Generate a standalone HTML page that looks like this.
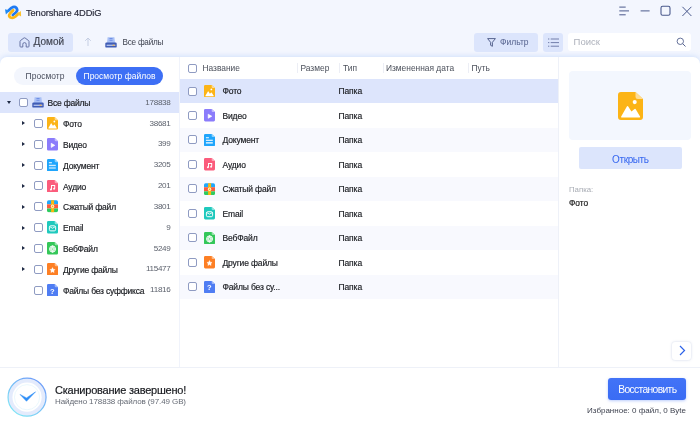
<!DOCTYPE html>
<html lang="ru"><head><meta charset="utf-8"><title>Tenorshare 4DDiG</title>
<style>
*{box-sizing:border-box;margin:0;padding:0}
html,body{width:700px;height:425px;overflow:hidden}
body{font-family:"Liberation Sans","DejaVu Sans",sans-serif;background:#f3f6fe;color:#1c1c1c;position:relative;font-size:9px}
#app{position:absolute;left:0;top:0;width:700px;height:425px;will-change:transform}
.abs{position:absolute}
i{display:block;font-style:normal}
#title{left:26px;top:6.500px;font-size:9.300px;line-height:12px;color:#2a2c3c;letter-spacing:-0.1px;white-space:nowrap}
#home{left:8px;top:32.500px;width:65.300px;height:19.200px;background:#dce5fc;border-radius:3px}
#home span{position:absolute;left:25.600px;top:3.700px;-webkit-text-stroke:0.15px currentColor;font-size:10px;line-height:12px;color:#3f4350}
#crumb{left:122.500px;top:37.600px;font-size:8.200px;line-height:10px;color:#3f4350;white-space:nowrap;letter-spacing:-0.25px}
#filter{left:474px;top:32.500px;width:64px;height:19.200px;background:#dce5fc;border-radius:3px}
#filter span{position:absolute;left:26px;top:4.800px;font-size:8.500px;line-height:10px;color:#56638f}
#listbtn{left:543px;top:32.500px;width:20px;height:19.200px;background:#dce5fc;border-radius:3px}
#search{left:568.300px;top:32.700px;width:122.700px;height:18.400px;background:#fff;border-radius:3px}
#search span{position:absolute;left:5.300px;top:3.800px;font-size:9.500px;line-height:12px;color:#adb1bb}
#shadow{display:none}
#panel{left:0;top:56.800px;width:700px;height:311px;background:#fff;border-radius:7px 7px 0 0;box-shadow:0 -1px 5px rgba(178,205,250,.5)}
#side{left:0;top:57px;width:179.900px;height:310px;border-right:1.300px solid #f0f3fb}
#tabs{left:14px;top:66.600px;width:149px;height:18px;border-radius:9px;background:#f3f6fd}
#tabs .t1{position:absolute;left:0;top:0;width:62px;height:18px;line-height:18.500px;text-align:center;font-size:8.500px;color:#4a4f5e}
#tabs .t2{position:absolute;left:62px;top:0;width:87px;height:18px;line-height:18.500px;text-align:center;font-size:8.500px;color:#fff;background:#3d6ff5;border-radius:9px}
.trow{position:absolute;left:0;width:178.800px;height:20.800px}
.trow.sel{background:#dde5fc}
.trow .arr{position:absolute;width:0;height:0}
.arr.down{top:9px;border-left:2.300px solid transparent;border-right:2.300px solid transparent;border-top:3px solid #1f2a44}
.arr.right{top:8.500px;border-top:2.500px solid transparent;border-bottom:2.500px solid transparent;border-left:3px solid #1f2a44}
.cb{position:absolute;width:9px;height:9px;border:1px solid #8f9bc2;border-radius:2px;background:#fff}
.trow .cb{top:6px}
.trow .ic{position:absolute;top:4.200px;width:11px;height:12.600px}
.trow .nm{position:absolute;top:6.300px;font-size:8.500px;line-height:11px;color:#1b1d22;white-space:nowrap;letter-spacing:-0.2px}
.trow .ct{position:absolute;right:8.300px;top:4.700px;font-size:8.100px;line-height:11px;color:#5d626d;letter-spacing:-0.300px}
#mid{left:179px;top:57px;width:380px;height:310px;border-right:1px solid #eef1f8}
.hdr{position:absolute;top:62.900px;font-size:8.400px;line-height:10px;color:#4a4f5a;white-space:nowrap}
.sep{position:absolute;top:63px;width:1px;height:10px;background:#eceef5}
.frow{position:absolute;left:179.800px;width:378.500px;height:24.500px}
.frow.alt::before{content:"";position:absolute;left:0;top:0.400px;width:100%;height:23.800px;background:#f8f9fe}
.frow.sel{background:#dde5fc}
.frow .cb{left:8.200px;top:8px}
.frow .ic{position:absolute;left:24.200px;top:6.400px;width:11px;height:12.400px}
.frow .nm{position:absolute;left:42.700px;top:7.800px;font-size:8.500px;line-height:11px;color:#1b1d22;white-space:nowrap;letter-spacing:-0.15px}
.frow .tp{position:absolute;left:158.700px;top:7.800px;font-size:8.500px;line-height:11px;color:#1b1d22;letter-spacing:-0.1px}
#prev{left:569px;top:71px;width:122px;height:69px;background:#f3f7fe;border-radius:4px}
#open{left:579px;top:147.200px;width:102.700px;height:21.800px;background:#dce5fc;border-radius:2px;text-align:center;line-height:25.600px;font-size:10px;color:#3566f0;letter-spacing:-0.400px;overflow:hidden}
#pl{left:569px;top:185px;font-size:7.800px;line-height:10px;color:#a8acb4}
#pv{left:569px;top:198.300px;font-size:8.400px;line-height:10px;color:#1b1b1b}
#next{left:672.300px;top:342.300px;width:18.500px;height:18px;background:#fff;border-radius:3px;box-shadow:0 0 2.500px rgba(120,140,190,.4)}
#bottom{left:0;top:366.500px;width:700px;height:58.500px;background:#fff;border-top:1px solid #eef1f8}
#done{left:55px;top:382.800px;font-size:11px;line-height:14px;color:#16181d;letter-spacing:-0.22px;white-space:nowrap}
#found{left:55px;top:396.800px;font-size:8px;line-height:10px;color:#666b75;letter-spacing:-0.1px;white-space:nowrap}
#rec{left:608px;top:378px;width:78px;height:21.500px;background:linear-gradient(#4273f7,#3a6cf4);border-radius:3px;color:#fff;font-size:10.300px;line-height:24px;text-align:center;box-shadow:0 1px 3px rgba(61,111,245,.35);letter-spacing:-0.650px;padding-left:0.600px;overflow:hidden}
#fav{right:14px;top:405.800px;font-size:8px;line-height:10px;color:#3f4350;white-space:nowrap}
.nm,.tp,#pv,#done,#title{-webkit-text-stroke:0.18px currentColor}
</style></head><body>
<div id="app">
<svg class="abs" style="left:1.800px;top:2.900px" width="24" height="20" viewBox="0 0 24 20"><path d="M6.300 7.800L9.500 4.800Q12.500 3 14.500 5Q16.200 7.500 13.800 9.500L10.800 12" fill="none" stroke="#1f7af3" stroke-width="2.700" stroke-linecap="round" stroke-linejoin="round"/><path d="M3 6.200L3.900 11.400L7.800 7.400Z" fill="#1f8af5"/><path d="M11.200 7.200L8 10.500Q6 13 8.500 14.500Q11 15.500 13.500 13.500L16.500 10.800" fill="none" stroke="#fbb615" stroke-width="2.700" stroke-linecap="round" stroke-linejoin="round"/><path d="M18.900 7.900L19.100 13.500L15 11Z" fill="#fcc22b"/></svg>
<div id="panel" class="abs"></div>
<div id="title" class="abs">Tenorshare 4DDiG</div>
<div id="home" class="abs"><svg style="position:absolute;left:11px;top:4.500px" width="11" height="11" viewBox="0 0 11 11"><path d="M1 4.400Q1 3.900 1.400 3.600L4.900 1Q5.500 0.600 6.100 1L9.600 3.600Q10 3.900 10 4.400V9.200Q10 10 9.200 10H7.200V7.300A1.700 1.700 0 0 0 3.800 7.300V10H1.800Q1 10 1 9.200Z" fill="none" stroke="#6773a3" stroke-width="1"/></svg><span>Домой</span></div>
<svg class="abs" style="left:84px;top:37px" width="8" height="9" viewBox="0 0 8 9"><path d="M4 9V1M1.200 3.800L4 1L6.800 3.800" fill="none" stroke="#c5cee3" stroke-width="1"/></svg>
<svg class="abs" style="left:104.500px;top:36.500px" width="12" height="11" viewBox="0 0 12 11"><path d="M2.600 0.300H9.400L10 6H2Z" fill="#a9c0f5"/><path d="M4.600 1.500H7.400M4.600 3.200H7.400" stroke="#5d7fe0" stroke-width="1.100"/><path d="M6 0.800V4" stroke="#a9c0f5" stroke-width="0.500"/><rect x="0.300" y="5.600" width="11.400" height="5" rx="1.200" fill="#3f5cb5"/><rect x="1.600" y="7.700" width="8.800" height="1.100" fill="#c9d6f7"/><rect x="7.600" y="7.700" width="2" height="1.100" fill="#f2b24a"/></svg>
<div id="crumb" class="abs">Все файлы</div>
<div id="filter" class="abs"><svg style="position:absolute;left:13px;top:5.500px" width="9" height="9" viewBox="0 0 9 9"><path d="M0.600 0.600H8.400L5.400 4.300V8.300L3.600 7.300V4.300Z" fill="none" stroke="#56638f" stroke-width="1" stroke-linejoin="round"/></svg><span>Фильтр</span></div>
<div id="listbtn" class="abs"><svg style="position:absolute;left:4.800px;top:5.200px" width="11" height="9" viewBox="0 0 11 9"><path d="M0 1h1.300M2.700 1h8.300M0 4.600h1.300M2.700 4.600h8.300M0 8.200h1.300M2.700 8.200h8.300" stroke="#5f6c9c" stroke-width="0.850"/></svg></div>
<div id="search" class="abs"><span>Поиск</span><svg style="position:absolute;left:107.600px;top:4.400px" width="11" height="11" viewBox="0 0 11 11"><circle cx="4.300" cy="4.300" r="3.200" fill="none" stroke="#56638f" stroke-width="0.900"/><path d="M6.700 6.700L9.500 9.500" stroke="#56638f" stroke-width="1"/></svg></div>
<svg class="abs" style="left:618px;top:4.400px" width="76" height="14" viewBox="0 0 76 14"><path d="M1.300 3.100H7.700M1.300 6.900H11M1.300 10.800H7.700" stroke="#4a598c" stroke-width="1"/><path d="M22.600 6.900H31.600" stroke="#4a598c" stroke-width="1"/><rect x="43" y="2.300" width="9" height="9" rx="1.600" fill="none" stroke="#4a598c" stroke-width="1.100"/><path d="M64.400 2.800L73.400 12M73.400 2.800L64.400 12" stroke="#4a598c" stroke-width="1"/></svg>
<div id="side" class="abs"></div>
<div id="tabs" class="abs"><div class="t1">Просмотр</div><div class="t2">Просмотр файлов</div></div>
<div id="tree">
<div class="trow sel" style="top:92.1px"><i class="arr down" style="left:6.700px"></i><i class="cb" style="left:19px"></i><svg class="abs" style="left:32.300px;top:5.200px" width="12" height="11" viewBox="0 0 12 11"><path d="M2.600 0.300H9.400L10 6H2Z" fill="#a9c0f5"/><path d="M4.600 1.500H7.400M4.600 3.200H7.400" stroke="#5d7fe0" stroke-width="1.100"/><path d="M6 0.800V4" stroke="#a9c0f5" stroke-width="0.500"/><rect x="0.300" y="5.600" width="11.400" height="5" rx="1.200" fill="#3f5cb5"/><rect x="1.600" y="7.700" width="8.800" height="1.100" fill="#c9d6f7"/><rect x="7.600" y="7.700" width="2" height="1.100" fill="#f2b24a"/></svg><span class="nm" style="left:47.500px">Все файлы</span><span class="ct">178838</span></div>
<div class="trow" style="top:112.9px"><i class="arr right" style="left:22.300px"></i><i class="cb" style="left:34px"></i><svg class="ic" style="left:47px" viewBox="0 0 11 12" preserveAspectRatio="none"><path d="M1.3 0H7.7L11 3V10.700A1.3 1.3 0 0 1 9.700 12H1.3A1.3 1.3 0 0 1 0 10.700V1.3A1.3 1.3 0 0 1 1.3 0Z" fill="#fcb416"/><path d="M7.7 0L11 3H8.700A1 1 0 0 1 7.7 2Z" fill="#fddc94"/><path d="M1.600 10.900Q1.200 10.900 1.400 10.500L3.900 6.200Q4.200 5.800 4.500 6.200L5.900 8.400L7.300 7.300Q7.600 7.100 7.800 7.400L9.700 10.500Q9.900 10.900 9.500 10.900Z" fill="#fff"/><circle cx="7.350" cy="4.300" r="0.900" fill="#fff"/></svg><span class="nm" style="left:63px">Фото</span><span class="ct">38681</span></div>
<div class="trow" style="top:133.8px"><i class="arr right" style="left:22.300px"></i><i class="cb" style="left:34px"></i><svg class="ic" style="left:47px" viewBox="0 0 11 12" preserveAspectRatio="none"><path d="M1.3 0H7.7L11 3V10.700A1.3 1.3 0 0 1 9.700 12H1.3A1.3 1.3 0 0 1 0 10.700V1.3A1.3 1.3 0 0 1 1.3 0Z" fill="#8b7cfb"/><path d="M7.7 0L11 3H8.700A1 1 0 0 1 7.7 2Z" fill="#c3bbfd"/><path d="M4.200 5L7.800 7L4.200 9Z" fill="#fff" stroke="#fff" stroke-width="0.600" stroke-linejoin="round"/></svg><span class="nm" style="left:63px">Видео</span><span class="ct">399</span></div>
<div class="trow" style="top:154.6px"><i class="arr right" style="left:22.300px"></i><i class="cb" style="left:34px"></i><svg class="ic" style="left:47px" viewBox="0 0 11 12" preserveAspectRatio="none"><path d="M1.3 0H7.7L11 3V10.700A1.3 1.3 0 0 1 9.700 12H1.3A1.3 1.3 0 0 1 0 10.700V1.3A1.3 1.3 0 0 1 1.3 0Z" fill="#1fa5fc"/><path d="M7.7 0L11 3H8.700A1 1 0 0 1 7.7 2Z" fill="#8fd3fd"/><path d="M1.900 3.600H4.900M1.900 8.600H8.800" stroke="#fff" stroke-width="1"/><path d="M1.900 6.150H8.800" stroke="#fff" stroke-width="1.300" opacity="0.800"/></svg><span class="nm" style="left:63px">Документ</span><span class="ct">3205</span></div>
<div class="trow" style="top:175.4px"><i class="arr right" style="left:22.300px"></i><i class="cb" style="left:34px"></i><svg class="ic" style="left:47px" viewBox="0 0 11 12" preserveAspectRatio="none"><path d="M1.3 0H7.7L11 3V10.700A1.3 1.3 0 0 1 9.700 12H1.3A1.3 1.3 0 0 1 0 10.700V1.3A1.3 1.3 0 0 1 1.3 0Z" fill="#fb5c7c"/><path d="M7.7 0L11 3H8.700A1 1 0 0 1 7.7 2Z" fill="#fda6b8"/><path d="M4.500 9V5.300H7.700V8.300" fill="none" stroke="#fff" stroke-width="1"/><circle cx="3.900" cy="9.050" r="0.950" fill="#fff"/><circle cx="7.100" cy="8.400" r="0.950" fill="#fff"/></svg><span class="nm" style="left:63px">Аудио</span><span class="ct">201</span></div>
<div class="trow" style="top:196.2px"><i class="arr right" style="left:22.300px"></i><i class="cb" style="left:34px"></i><svg class="ic" style="left:47px" viewBox="0 0 11 12" preserveAspectRatio="none"><clipPath id="zc"><rect x="0" y="0.300" width="11" height="11.400" rx="1.600"/></clipPath><g clip-path="url(#zc)"><rect width="11" height="4.100" fill="#1fa8fb"/><rect y="4.100" width="11" height="4" fill="#fb5b3c"/><rect y="8.100" width="11" height="3.900" fill="#2ecb60"/><rect x="4.100" width="3" height="12" fill="#fbb70f"/></g><circle cx="5.550" cy="6.100" r="1.250" fill="#fbb70f" stroke="#fff" stroke-width="0.900"/></svg><span class="nm" style="left:63px">Сжатый файл</span><span class="ct">3801</span></div>
<div class="trow" style="top:217.0px"><i class="arr right" style="left:22.300px"></i><i class="cb" style="left:34px"></i><svg class="ic" style="left:47px" viewBox="0 0 11 12" preserveAspectRatio="none"><path d="M1.3 0H7.7L11 3V10.700A1.3 1.3 0 0 1 9.700 12H1.3A1.3 1.3 0 0 1 0 10.700V1.3A1.3 1.3 0 0 1 1.3 0Z" fill="#1fc9bd"/><path d="M7.7 0L11 3H8.700A1 1 0 0 1 7.7 2Z" fill="#8fe6df"/><rect x="2.400" y="4.600" width="6.200" height="4.800" rx="1.300" fill="none" stroke="#fff" stroke-width="0.950"/><path d="M2.900 5.500L5.500 6.900L8.100 5.500" fill="none" stroke="#fff" stroke-width="0.850"/></svg><span class="nm" style="left:63px">Email</span><span class="ct">9</span></div>
<div class="trow" style="top:237.9px"><i class="arr right" style="left:22.300px"></i><i class="cb" style="left:34px"></i><svg class="ic" style="left:47px" viewBox="0 0 11 12" preserveAspectRatio="none"><path d="M1.3 0H7.7L11 3V10.700A1.3 1.3 0 0 1 9.700 12H1.3A1.3 1.3 0 0 1 0 10.700V1.3A1.3 1.3 0 0 1 1.3 0Z" fill="#34c759"/><path d="M7.7 0L11 3H8.700A1 1 0 0 1 7.7 2Z" fill="#98e4aa"/><circle cx="5.550" cy="6.700" r="3" fill="#fff" fill-opacity="0.350" stroke="#fff" stroke-width="0.850"/><path d="M2.600 6.700H8.500M5.550 3.700V9.700" stroke="#fff" stroke-width="0.800"/><ellipse cx="5.550" cy="6.700" rx="1.400" ry="3" fill="none" stroke="#fff" stroke-width="0.700"/><circle cx="5.550" cy="6.700" r="0.550" fill="#34c759"/></svg><span class="nm" style="left:63px">ВебФайл</span><span class="ct">5249</span></div>
<div class="trow" style="top:258.7px"><i class="arr right" style="left:22.300px"></i><i class="cb" style="left:34px"></i><svg class="ic" style="left:47px" viewBox="0 0 11 12" preserveAspectRatio="none"><path d="M1.3 0H7.7L11 3V10.700A1.3 1.3 0 0 1 9.700 12H1.3A1.3 1.3 0 0 1 0 10.700V1.3A1.3 1.3 0 0 1 1.3 0Z" fill="#fd7f24"/><path d="M7.7 0L11 3H8.700A1 1 0 0 1 7.7 2Z" fill="#febd8c"/><path d="M5.500 4.400L6.300 6L8.050 6.250L6.800 7.450L7.100 9.150L5.500 8.300L3.900 9.150L4.200 7.450L2.950 6.250L4.700 6Z" fill="#fff" stroke="#fff" stroke-width="0.400" stroke-linejoin="round"/></svg><span class="nm" style="left:63px">Другие файлы</span><span class="ct">115477</span></div>
<div class="trow" style="top:279.5px"><i class="cb" style="left:34px"></i><svg class="ic" style="left:47px" viewBox="0 0 11 12" preserveAspectRatio="none"><path d="M1.3 0H7.7L11 3V10.700A1.3 1.3 0 0 1 9.700 12H1.3A1.3 1.3 0 0 1 0 10.700V1.3A1.3 1.3 0 0 1 1.3 0Z" fill="#4f7df3"/><path d="M7.7 0L11 3H8.700A1 1 0 0 1 7.7 2Z" fill="#a0baf9"/><text x="5.450" y="9.100" font-size="7.600" font-weight="bold" text-anchor="middle" fill="#fff" font-family="Liberation Sans, sans-serif">?</text></svg><span class="nm" style="left:63px">Файлы без суффикса</span><span class="ct">11816</span></div>
</div>
<div id="mid" class="abs"></div>
<i class="cb abs" style="left:188px;top:63.500px"></i>
<div class="hdr" style="left:202.500px">Название</div><div class="sep" style="left:296.500px"></div>
<div class="hdr" style="left:300.500px">Размер</div><div class="sep" style="left:339px"></div>
<div class="hdr" style="left:343px">Тип</div><div class="sep" style="left:382.500px"></div>
<div class="hdr" style="left:386px">Измененная дата</div><div class="sep" style="left:468px"></div>
<div class="hdr" style="left:471.500px">Путь</div>
<div id="files">
<div class="frow sel" style="top:78.50px"><i class="cb"></i><svg class="ic" viewBox="0 0 11 12" preserveAspectRatio="none"><path d="M1.3 0H7.7L11 3V10.700A1.3 1.3 0 0 1 9.700 12H1.3A1.3 1.3 0 0 1 0 10.700V1.3A1.3 1.3 0 0 1 1.3 0Z" fill="#fcb416"/><path d="M7.7 0L11 3H8.700A1 1 0 0 1 7.7 2Z" fill="#fddc94"/><path d="M1.600 10.900Q1.200 10.900 1.400 10.500L3.900 6.200Q4.200 5.800 4.500 6.200L5.900 8.400L7.300 7.300Q7.600 7.100 7.800 7.400L9.700 10.500Q9.900 10.900 9.500 10.900Z" fill="#fff"/><circle cx="7.350" cy="4.300" r="0.900" fill="#fff"/></svg><span class="nm">Фото</span><span class="tp">Папка</span></div>
<div class="frow" style="top:102.98px"><i class="cb"></i><svg class="ic" viewBox="0 0 11 12" preserveAspectRatio="none"><path d="M1.3 0H7.7L11 3V10.700A1.3 1.3 0 0 1 9.700 12H1.3A1.3 1.3 0 0 1 0 10.700V1.3A1.3 1.3 0 0 1 1.3 0Z" fill="#8b7cfb"/><path d="M7.7 0L11 3H8.700A1 1 0 0 1 7.7 2Z" fill="#c3bbfd"/><path d="M4.200 5L7.800 7L4.200 9Z" fill="#fff" stroke="#fff" stroke-width="0.600" stroke-linejoin="round"/></svg><span class="nm">Видео</span><span class="tp">Папка</span></div>
<div class="frow alt" style="top:127.46px"><i class="cb"></i><svg class="ic" viewBox="0 0 11 12" preserveAspectRatio="none"><path d="M1.3 0H7.7L11 3V10.700A1.3 1.3 0 0 1 9.700 12H1.3A1.3 1.3 0 0 1 0 10.700V1.3A1.3 1.3 0 0 1 1.3 0Z" fill="#1fa5fc"/><path d="M7.7 0L11 3H8.700A1 1 0 0 1 7.7 2Z" fill="#8fd3fd"/><path d="M1.900 3.600H4.900M1.900 8.600H8.800" stroke="#fff" stroke-width="1"/><path d="M1.900 6.150H8.800" stroke="#fff" stroke-width="1.300" opacity="0.800"/></svg><span class="nm">Документ</span><span class="tp">Папка</span></div>
<div class="frow" style="top:151.94px"><i class="cb"></i><svg class="ic" viewBox="0 0 11 12" preserveAspectRatio="none"><path d="M1.3 0H7.7L11 3V10.700A1.3 1.3 0 0 1 9.700 12H1.3A1.3 1.3 0 0 1 0 10.700V1.3A1.3 1.3 0 0 1 1.3 0Z" fill="#fb5c7c"/><path d="M7.7 0L11 3H8.700A1 1 0 0 1 7.7 2Z" fill="#fda6b8"/><path d="M4.500 9V5.300H7.700V8.300" fill="none" stroke="#fff" stroke-width="1"/><circle cx="3.900" cy="9.050" r="0.950" fill="#fff"/><circle cx="7.100" cy="8.400" r="0.950" fill="#fff"/></svg><span class="nm">Аудио</span><span class="tp">Папка</span></div>
<div class="frow alt" style="top:176.42px"><i class="cb"></i><svg class="ic" viewBox="0 0 11 12" preserveAspectRatio="none"><clipPath id="zc2"><rect x="0" y="0.300" width="11" height="11.400" rx="1.600"/></clipPath><g clip-path="url(#zc2)"><rect width="11" height="4.100" fill="#1fa8fb"/><rect y="4.100" width="11" height="4" fill="#fb5b3c"/><rect y="8.100" width="11" height="3.900" fill="#2ecb60"/><rect x="4.100" width="3" height="12" fill="#fbb70f"/></g><circle cx="5.550" cy="6.100" r="1.250" fill="#fbb70f" stroke="#fff" stroke-width="0.900"/></svg><span class="nm">Сжатый файл</span><span class="tp">Папка</span></div>
<div class="frow" style="top:200.90px"><i class="cb"></i><svg class="ic" viewBox="0 0 11 12" preserveAspectRatio="none"><path d="M1.3 0H7.7L11 3V10.700A1.3 1.3 0 0 1 9.700 12H1.3A1.3 1.3 0 0 1 0 10.700V1.3A1.3 1.3 0 0 1 1.3 0Z" fill="#1fc9bd"/><path d="M7.7 0L11 3H8.700A1 1 0 0 1 7.7 2Z" fill="#8fe6df"/><rect x="2.400" y="4.600" width="6.200" height="4.800" rx="1.300" fill="none" stroke="#fff" stroke-width="0.950"/><path d="M2.900 5.500L5.500 6.900L8.100 5.500" fill="none" stroke="#fff" stroke-width="0.850"/></svg><span class="nm">Email</span><span class="tp">Папка</span></div>
<div class="frow alt" style="top:225.38px"><i class="cb"></i><svg class="ic" viewBox="0 0 11 12" preserveAspectRatio="none"><path d="M1.3 0H7.7L11 3V10.700A1.3 1.3 0 0 1 9.700 12H1.3A1.3 1.3 0 0 1 0 10.700V1.3A1.3 1.3 0 0 1 1.3 0Z" fill="#34c759"/><path d="M7.7 0L11 3H8.700A1 1 0 0 1 7.7 2Z" fill="#98e4aa"/><circle cx="5.550" cy="6.700" r="3" fill="#fff" fill-opacity="0.350" stroke="#fff" stroke-width="0.850"/><path d="M2.600 6.700H8.500M5.550 3.700V9.700" stroke="#fff" stroke-width="0.800"/><ellipse cx="5.550" cy="6.700" rx="1.400" ry="3" fill="none" stroke="#fff" stroke-width="0.700"/><circle cx="5.550" cy="6.700" r="0.550" fill="#34c759"/></svg><span class="nm">ВебФайл</span><span class="tp">Папка</span></div>
<div class="frow" style="top:249.86px"><i class="cb"></i><svg class="ic" viewBox="0 0 11 12" preserveAspectRatio="none"><path d="M1.3 0H7.7L11 3V10.700A1.3 1.3 0 0 1 9.700 12H1.3A1.3 1.3 0 0 1 0 10.700V1.3A1.3 1.3 0 0 1 1.3 0Z" fill="#fd7f24"/><path d="M7.7 0L11 3H8.700A1 1 0 0 1 7.7 2Z" fill="#febd8c"/><path d="M5.500 4.400L6.300 6L8.050 6.250L6.800 7.450L7.100 9.150L5.500 8.300L3.900 9.150L4.200 7.450L2.950 6.250L4.700 6Z" fill="#fff" stroke="#fff" stroke-width="0.400" stroke-linejoin="round"/></svg><span class="nm">Другие файлы</span><span class="tp">Папка</span></div>
<div class="frow alt" style="top:274.34px"><i class="cb"></i><svg class="ic" viewBox="0 0 11 12" preserveAspectRatio="none"><path d="M1.3 0H7.7L11 3V10.700A1.3 1.3 0 0 1 9.700 12H1.3A1.3 1.3 0 0 1 0 10.700V1.3A1.3 1.3 0 0 1 1.3 0Z" fill="#4f7df3"/><path d="M7.7 0L11 3H8.700A1 1 0 0 1 7.7 2Z" fill="#a0baf9"/><text x="5.450" y="9.100" font-size="7.600" font-weight="bold" text-anchor="middle" fill="#fff" font-family="Liberation Sans, sans-serif">?</text></svg><span class="nm">Файлы без су...</span><span class="tp">Папка</span></div>
</div>
<div id="prev" class="abs"></div>
<svg class="abs" style="left:618px;top:92px" width="25" height="28" viewBox="0 0 11 12" preserveAspectRatio="none"><path d="M1.3 0H7.7L11 3V10.700A1.3 1.3 0 0 1 9.700 12H1.3A1.3 1.3 0 0 1 0 10.700V1.3A1.3 1.3 0 0 1 1.3 0Z" fill="#fcb416"/><path d="M7.7 0L11 3H8.700A1 1 0 0 1 7.7 2Z" fill="#fddc94"/><path d="M1.600 10.900Q1.200 10.900 1.400 10.500L3.900 6.200Q4.200 5.800 4.500 6.200L5.900 8.400L7.300 7.300Q7.600 7.100 7.800 7.400L9.700 10.500Q9.900 10.900 9.500 10.900Z" fill="#fff"/><circle cx="7.350" cy="4.300" r="0.900" fill="#fff"/></svg>
<div id="open" class="abs">Открыть</div>
<div id="pl" class="abs">Папка:</div>
<div id="pv" class="abs">Фото</div>
<div id="next" class="abs"><svg style="position:absolute;left:6.400px;top:3px" width="7" height="11" viewBox="0 0 7 11"><path d="M1 1L5.500 5.500L1 10" fill="none" stroke="#2d62e8" stroke-width="1.200"/></svg></div>
<div id="bottom" class="abs"></div>
<svg class="abs" style="left:6px;top:375.500px" width="42" height="43" viewBox="0 0 42 43"><defs><linearGradient id="rg" x1="0.800" y1="0.100" x2="0.200" y2="0.900"><stop offset="0" stop-color="#6f9ff8"/><stop offset="1" stop-color="#7fe3f5"/></linearGradient></defs><circle cx="21.050" cy="21.200" r="19" fill="#e4ebfc" stroke="url(#rg)" stroke-width="1.200"/><circle cx="21.050" cy="21.200" r="14.600" fill="#fff"/><circle cx="21.050" cy="21.200" r="12.600" fill="none" stroke="#e6f6fd" stroke-width="0.800"/><path d="M14 18.400L20.500 25.300L29.600 15.800L20.500 21.900Z" fill="#2f8ef7" stroke="#2f8ef7" stroke-width="0.500" stroke-linejoin="round"/></svg>
<div id="done" class="abs">Сканирование завершено!</div>
<div id="found" class="abs">Найдено 178838 файлов (97.49 GB)</div>
<div id="rec" class="abs">Восстановить</div>
<div id="fav" class="abs">Избранное: 0 файл, 0 Byte</div>
</div>
</body></html>
